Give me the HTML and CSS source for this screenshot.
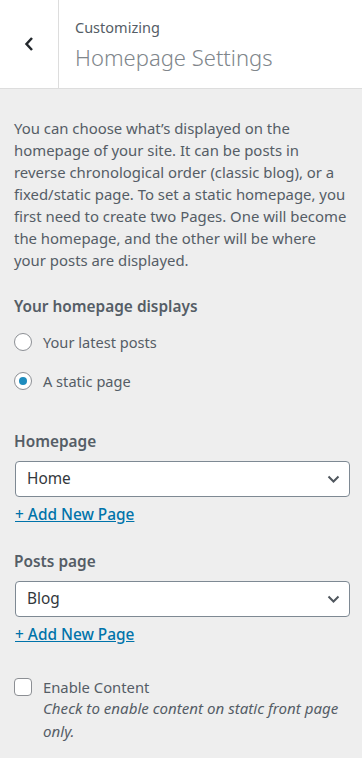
FILE: index.html
```html
<!DOCTYPE html>
<html>
    <head>
        <title>Homepage Settings</title>
        <link rel="stylesheet" href="styles.css">
    </head>
    <body>

<!----- HEADER ----->
        <div class="header">
            <div class="backButton">
                <svg width="10" height="16" viewBox="0 0 10 16"><path d="M8 2 L2.5 8 L8 14" fill="none" stroke="#23282d" stroke-width="2.5"/></svg>
            </div>
            <div class="headerTitle">
                <div class="action">Customizing</div>
                <div class="title">Homepage Settings</div>
            </div>
        </div>

<!----- PANEL ----->
        <div class="panel">
            <p class="description">You can choose what’s displayed on the homepage of your site. It can be posts in reverse chronological order (classic blog), or a fixed/static page. To set a static homepage, you first need to create two Pages. One will become the homepage, and the other will be where your posts are displayed.</p>

            <div class="control first">
                <div class="controlTitle">Your homepage displays</div>
                <label class="choice"><span class="radio"></span>Your latest posts</label>
                <label class="choice"><span class="radio checked"></span>A static page</label>
            </div>

            <div class="control">
                <div class="controlTitle">Homepage</div>
                <div class="select">Home<svg class="arrow" width="13" height="8" viewBox="0 0 13 8"><path d="M1.5 1.5 L6.5 6.5 L11.5 1.5" fill="none" stroke="#50575e" stroke-width="2"/></svg></div>
                <a class="addNew" href="#">+ Add New Page</a>
            </div>

            <div class="control">
                <div class="controlTitle">Posts page</div>
                <div class="select">Blog<svg class="arrow" width="13" height="8" viewBox="0 0 13 8"><path d="M1.5 1.5 L6.5 6.5 L11.5 1.5" fill="none" stroke="#50575e" stroke-width="2"/></svg></div>
                <a class="addNew" href="#">+ Add New Page</a>
            </div>

            <div class="checkControl">
                <span class="checkbox"></span>
                <div>
                    <div class="checkLabel">Enable Content</div>
                    <div class="checkDesc">Check to enable content on static front page only.</div>
                </div>
            </div>
        </div>
    </body>
</html>
```

FILE: styles.css
```css
body{
    margin: 0;
    font-family: "Noto Sans", sans-serif;
    background-color: #eee;
    color: #555d66;
}
.header{
    display: flex;
    height: 88px;
    background-color: #fff;
    border-bottom: 1px solid #ddd;
}
.backButton{
    width: 58px;
    border-right: 1px solid #ddd;
    display: flex;
    align-items: center;
    justify-content: center;
}
.headerTitle{
    padding: 15px 0 0 16px;
}
.action{
    font-size: 14.5px;
    line-height: 24px;
    color: #555d66;
}
.title{
    font-size: 22px;
    font-weight: 300;
    line-height: 36px;
    color: #80868b;
}
.panel{
    padding: 28px 12px 20px 14px;
}
.description{
    margin: 0 0 25px 0;
    font-size: 14.9px;
    line-height: 22px;
}
.control{
    margin-bottom: 25px;
}
.control.first{
    margin-bottom: 31px;
}
.controlTitle{
    font-size: 15.4px;
    font-weight: 600;
    line-height: 22px;
    margin-bottom: 8px;
}
.first .controlTitle{
    margin-bottom: 4px;
}
.choice{
    display: flex;
    align-items: center;
    font-size: 14.6px;
    height: 39px;
}
.radio{
    width: 18px;
    height: 18px;
    border: 1px solid #8c8f94;
    border-radius: 50%;
    background-color: #fff;
    margin-right: 11px;
    box-sizing: border-box;
    display: flex;
    align-items: center;
    justify-content: center;
}
.radio.checked::after{
    content: "";
    width: 8px;
    height: 8px;
    border-radius: 50%;
    background-color: #1e8cbe;
}
.select{
    position: relative;
    height: 36px;
    box-sizing: border-box;
    margin-left: 1px;
    padding-left: 11px;
    border: 1px solid #7e8993;
    border-radius: 4px;
    background-color: #fff;
    font-size: 15.4px;
    line-height: 34px;
    color: #32373c;
}
.arrow{
    position: absolute;
    right: 9px;
    top: 13px;
}
.addNew{
    display: inline-block;
    margin: 7px 0 0 1px;
    font-size: 15.4px;
    font-weight: 500;
    line-height: 22px;
    color: #0073aa;
    text-decoration: underline;
}
.checkControl{
    display: flex;
    align-items: flex-start;
    margin-top: 30px;
}
.checkbox{
    width: 18px;
    height: 18px;
    box-sizing: border-box;
    margin: 2px 11px 0 0;
    border: 1px solid #8c8f94;
    border-radius: 4px;
    background-color: #fff;
    flex-shrink: 0;
}
.checkLabel{
    font-size: 14.8px;
    line-height: 22px;
}
.checkDesc{
    margin-top: -1px;
    font-size: 15.1px;
    font-style: italic;
    line-height: 23px;
}
```
